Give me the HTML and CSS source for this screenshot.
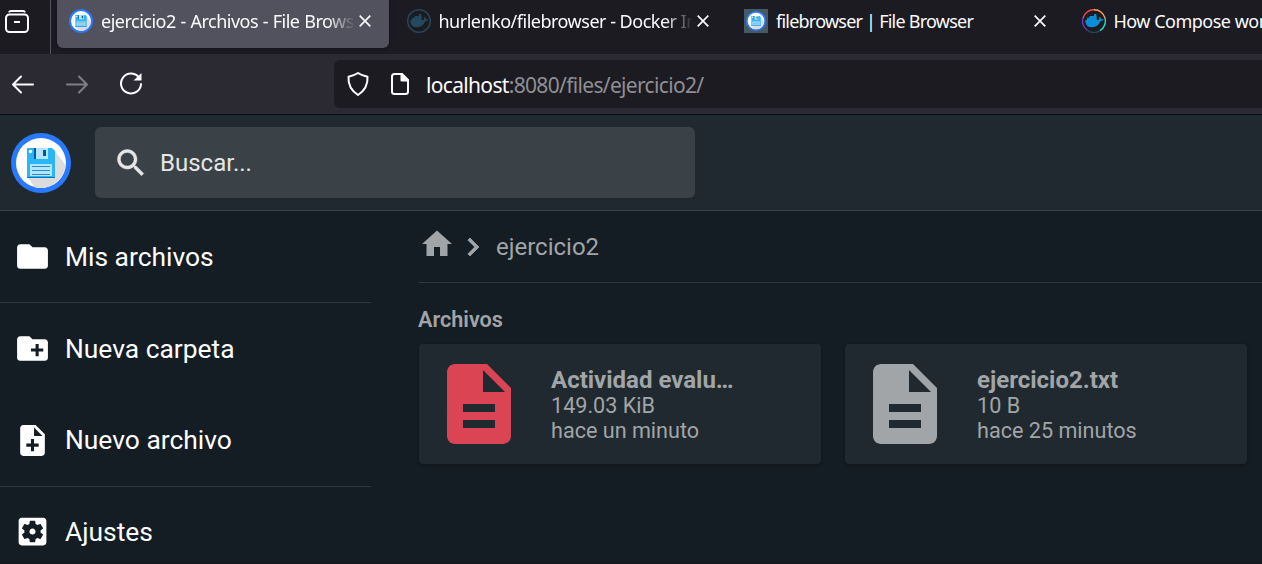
FILE: index.html
```html
<!DOCTYPE html>
<html lang="es">
<head>
<meta charset="utf-8">
<title>ejercicio2 - Archivos - File Browser</title>
<link rel="stylesheet" href="styles.css">
</head>
<body>
<svg class="defs" aria-hidden="true">
  <defs>
    <symbol id="close" viewBox="0 0 12 12"><path d="M.7.7l10.6 10.6M11.3.7L.7 11.3" fill="none" stroke="currentColor" stroke-width="1.7"/></symbol>
    <symbol id="logo" viewBox="0 0 60 60">
      <circle cx="30" cy="30" r="30" fill="#2979ff"/><circle cx="30" cy="30" r="25" fill="#fff"/>
      <path d="M43 17l11.500 15a25 25 0 0 1-30.500 22.300L17 45z" fill="#dcdcdc"/>
      <path d="M16 15h25l3 3v27H16z" fill="#29b6f6"/>
      <path d="M16 44h28v1H16z" fill="#0277bd"/>
      <path d="M23 15h14v11H23z" fill="#b3e5fc"/><path d="M23 15h2v11h-2zM32 17h3v6h-3z" fill="#01579b"/>
      <circle cx="19.500" cy="18.500" r="1.700" fill="#fff"/>
      <path d="M19 31h22v12H19z" fill="#b3e5fc"/><path d="M21 33.500h18M21 37.500h18M21 41.500h18" stroke="#0277bd" stroke-width=".8"/>
    </symbol>
    <symbol id="whale" viewBox="0 0 24 24"><path d="M3.300 11h14c-.7-1.400-.4-2.300.4-3 1 .7 1.300 1.400 1.200 2.200 1-.2 1.800 0 2.400.4-.6 1.300-1.700 1.700-3 1.600-1.700 4-4.600 6-8.600 6-4.300 0-6.500-2.500-6.400-7.200zM5 8.800h9.800V11H5zM7.500 7h7v2h-7zM12 5h2.300v2.200H12z" fill="currentColor"/></symbol>
    <symbol id="file" viewBox="0 0 24 24"><path d="M14 2H6c-1.100 0-1.990.9-1.990 2L4 20c0 1.100.89 2 1.990 2H18c1.100 0 2-.9 2-2V8l-6-6zm2 16H8v-2h8v2zm0-4H8v-2h8v2zm-3-5V3.500L18.500 9H13z" fill="currentColor"/></symbol>
  </defs>
</svg>

<div class="tabs">
  <div class="firefox-view"><svg width="26" height="26" viewBox="0 0 26 26" fill="none" stroke="#fbfbfe" stroke-width="2"><rect x="1" y="5.500" width="22" height="17.500" rx="3.500"/><path d="M4 3.300Q4.500 2 6 2h12q1.500 0 2 1.300M9 13h6"/></svg></div>
  <div class="tab active"><svg class="favicon"><use href="#logo"/></svg><span class="label fade t1">ejercicio2 - Archivos - File Browser</span><svg class="close"><use href="#close"/></svg></div>
  <div class="tab"><svg class="favicon dim" viewBox="0 0 24 24"><circle cx="12" cy="12" r="11.300" fill="none" stroke="currentColor" stroke-width="1.400"/><use href="#whale"/></svg><span class="label fade t2">hurlenko/filebrowser - Docker Image</span><svg class="close"><use href="#close"/></svg></div>
  <div class="tab"><span class="favicon square"><svg width="20" height="20"><use href="#logo"/></svg></span><span class="label t3">filebrowser | File Browser</span><svg class="close"><use href="#close"/></svg></div>
  <div class="tab"><svg class="favicon blue" viewBox="0 0 24 24"><g fill="none" stroke-width="1.400"><path d="M1 9A11.300 11.300 0 0 1 12 .7" stroke="#ff4b58"/><path d="M12 .7A11.300 11.300 0 0 1 23 9" stroke="#ffa94d"/><path d="M23 9a11.300 11.300 0 0 1-5 12.600" stroke="#23dfc2"/><path d="M18 21.600A11.300 11.300 0 0 1 5 21" stroke="#23475e"/><path d="M5 21A11.300 11.300 0 0 1 1 9" stroke="#713cc2"/></g><use href="#whale"/></svg><span class="label t4">How Compose works</span></div>
</div>

<div class="toolbar">
  <div class="nav">
    <svg width="24" height="24" viewBox="0 0 24 24"><path d="M22 12.500H2M10 4.500l-8 8 8 8"/></svg>
    <svg class="off" width="24" height="24" viewBox="0 0 24 24"><path d="M2 12.500h20M14 4.500l8 8-8 8"/></svg>
    <svg width="24" height="24" viewBox="0 0 24 24"><path d="M20.500 6.200A10 10 0 1 0 22 12"/><path d="M22.500 1v7.500h-8z" fill="#fbfbfe" stroke="none"/></svg>
  </div>
  <div class="urlbar">
    <svg width="24" height="26" viewBox="0 0 24 26"><path d="M12 2c3 2 6 3 9.500 3.800.5 7-1.500 13-9.500 18.200C4 18.800 2 12.800 2.500 5.800 6 5 9 4 12 2z"/></svg>
    <svg class="page" width="20" height="24" viewBox="0 0 20 24"><path d="M12 2H4.500A2.500 2.500 0 0 0 2 4.500v15A2.500 2.500 0 0 0 4.500 22h11a2.500 2.500 0 0 0 2.500-2.500V8z"/><path d="M11.500 2v6.500H18z" fill="#fbfbfe"/></svg>
    <span class="url"><b>localhost</b>:8080/files/ejercicio2/</span>
  </div>
</div>

<header class="header">
  <svg class="logo"><use href="#logo"/></svg>
  <div class="search">
    <svg width="36" height="36" viewBox="0 0 24 24"><path d="M15.500 14h-.79l-.28-.27C15.410 12.590 16 11.110 16 9.500 16 5.910 13.090 3 9.500 3S3 5.910 3 9.500 5.910 16 9.500 16c1.610 0 3.090-.59 4.230-1.570l.27.28v.79l5 4.990L20.490 19l-4.990-5zm-6 0C7.010 14 5 11.990 5 9.500S7.010 5 9.500 5 14 7.010 14 9.500 11.990 14 9.500 14z" fill="currentColor" stroke="currentColor" stroke-width=".3"/></svg>
    <span>Buscar...</span>
  </div>
</header>

<div class="body">
  <nav class="side">
    <div class="group"><a class="item"><svg viewBox="0 0 24 24"><path d="M10 4H4c-1.100 0-1.990.9-1.990 2L2 18c0 1.100.9 2 2 2h16c1.100 0 2-.9 2-2V8c0-1.100-.9-2-2-2h-8l-2-2z"/></svg><span>Mis archivos</span></a></div>
    <div class="group"><a class="item"><svg viewBox="0 0 24 24"><path d="M20 6h-8l-2-2H4c-1.110 0-1.990.89-1.990 2L2 18c0 1.110.89 2 2 2h16c1.110 0 2-.89 2-2V8c0-1.110-.89-2-2-2zm-1 8h-3v3h-2v-3h-3v-2h3V9h2v3h3v2z"/></svg><span>Nueva carpeta</span></a>
    <a class="item tall"><svg viewBox="0 0 24 24"><path d="M14 2H6c-1.100 0-1.990.9-1.990 2L4 20c0 1.100.89 2 1.990 2H18c1.100 0 2-.9 2-2V8l-6-6zm2 14h-3v3h-2v-3H8v-2h3v-3h2v3h3v2zm-3-7V3.500L18.500 9H13z"/></svg><span>Nuevo archivo</span></a></div>
    <div class="group"><a class="item short"><svg viewBox="0 0 24 24"><path d="M12 10c-1.100 0-2 .9-2 2s.9 2 2 2 2-.9 2-2-.9-2-2-2zm7-7H5c-1.110 0-2 .9-2 2v14c0 1.100.89 2 2 2h14c1.110 0 2-.9 2-2V5c0-1.100-.89-2-2-2zm-1.750 9c0 .23-.02.46-.05.68l1.480 1.160c.13.11.17.3.08.45l-1.400 2.420c-.09.15-.27.21-.43.15l-1.740-.7c-.36.28-.76.51-1.180.69l-.26 1.850c-.03.17-.18.3-.35.3h-2.800c-.17 0-.32-.13-.35-.29l-.26-1.850c-.43-.18-.82-.41-1.180-.69l-1.740.7c-.16.06-.34 0-.43-.15l-1.400-2.420c-.09-.15-.05-.34.08-.45l1.480-1.160c-.03-.23-.05-.46-.05-.69 0-.23.02-.46.05-.68l-1.480-1.160c-.13-.11-.17-.3-.08-.45l1.400-2.420c.09-.15.27-.21.43-.15l1.740.7c.36-.28.76-.51 1.180-.69l.26-1.850c.03-.17.18-.3.35-.3h2.800c.17 0 .32.13.35.29l.26 1.850c.43.18.82.41 1.180.69l1.740-.7c.16-.06.34 0 .43.15l1.400 2.420c.09.15.05.34-.08.45l-1.480 1.160c.03.23.05.46.05.69z"/></svg><span>Ajustes</span></a></div>
  </nav>
  <main class="main">
    <div class="crumbs">
      <svg class="home" width="36" height="36" viewBox="0 0 24 24"><path d="M10 20v-6h4v6h5v-8h3L12 3 2 12h3v8z"/></svg>
      <svg class="chevron" width="36" height="36" viewBox="0 0 24 24"><path d="M10 6L8.590 7.410 13.170 12l-4.580 4.590L10 18l6-6z" stroke="currentColor" stroke-width=".5"/></svg>
      <span>ejercicio2</span>
    </div>
    <h2>Archivos</h2>
    <div class="cards">
      <div class="card"><svg class="red"><use href="#file"/></svg><div class="info"><p class="name">Actividad evalu…</p><p>149.03 KiB</p><p>hace un minuto</p></div></div>
      <div class="card"><svg><use href="#file"/></svg><div class="info"><p class="name">ejercicio2.txt</p><p>10 B</p><p>hace 25 minutos</p></div></div>
    </div>
  </main>
</div>
<div class="bottom"></div>
</body>
</html>
```
FILE: styles.css
```css
* { box-sizing: border-box; }
body { margin: 0; width: 1262px; height: 564px; overflow: hidden; display: flex; flex-direction: column; background: #141d24; font-family: Roboto, sans-serif; }
svg { display: block; flex: none; }
p, h2 { margin: 0; }
.defs { position: absolute; width: 0; height: 0; }

.tabs { height: 54px; flex: none; display: flex; background: #1c1b22; color: #fbfbfe; font: 18px/24px "Noto Sans", sans-serif; overflow: hidden; }
.firefox-view { width: 51px; flex: none; padding: 9px 0 0 5px; border-right: 1px solid #55545c; margin-right: 6px; }
.tab { width: 332px; height: 48px; flex: none; display: flex; align-items: center; padding: 0 18px 6px 12px; margin-right: 5.500px; }
.tab.active { background: #52525e; border-radius: 0 0 6px 6px; box-shadow: 0 0 4px #0006; }
.favicon { width: 24px; height: 24px; flex: none; margin-right: 8px; }
.dim { color: #24485d; }
.blue { color: #088ed5; }
.square { background: #455a64; display: grid; place-items: center; }
.label { flex: 1; min-width: 0; overflow: hidden; white-space: nowrap; }
.fade { -webkit-mask-image: linear-gradient(to left, transparent, #000 28px); mask-image: linear-gradient(to left, transparent, #000 28px); margin-right: 4px; }
.t1, .t2, .t4 { letter-spacing: -.5px; }
.t1 { word-spacing: .5px; }
.t3 { letter-spacing: -.77px; }
.close { width: 12px; height: 12px; }

.toolbar { height: 61px; flex: none; display: flex; background: #2b2a33; border-bottom: 1px solid #0c0c0d; padding: 6px 0; }
.nav { width: 334px; display: flex; align-items: center; gap: 30px; padding-left: 11px; }
.nav svg, .urlbar svg { fill: none; stroke: #fbfbfe; stroke-width: 2; stroke-linejoin: round; stroke-linecap: round; }
.nav .off { opacity: .4; }
.urlbar { flex: 1; height: 48px; display: flex; align-items: center; padding-left: 12px; background: #1c1b22; border-radius: 6px 0 0 6px; }
.urlbar .page { margin: 0 16px 0 20px; }
.url { color: #8f8f94; font: 21px/28px "Noto Sans", sans-serif; letter-spacing: -.67px; padding-top: 2px; }
.url b { color: #fbfbfe; font-weight: 400; }

.header { height: 96px; flex: none; display: flex; align-items: center; padding-left: 11px; background: #20292f; border-bottom: 1px solid #394147; }
.logo { width: 60px; height: 60px; margin-right: 24px; }
.search { width: 600px; height: 71px; display: flex; align-items: center; gap: 11px; padding-left: 18px; border-radius: 6px; background: #3a4147; color: #e6e6e6; font-size: 24px; }

.body { flex: 1; min-height: 0; display: flex; }
.side { width: 371px; flex: none; overflow: hidden; color: #fff; font-size: 26.400px; }
.group { border-bottom: 1px solid #30383e; }
.item { height: 91px; display: flex; align-items: center; gap: 14px; padding-left: 14px; }
.tall { height: 92px; }
.short { height: 89px; }
.item svg { width: 37px; height: 37px; fill: currentColor; }
.main { flex: 1; min-width: 0; padding-left: 48px; color: #a1a5a7; }
.crumbs { height: 72px; display: flex; align-items: center; border-bottom: 1px solid #30383e; font-size: 24px; }
.crumbs svg { fill: currentColor; }
.home { margin-bottom: 5px; }
.crumbs span { margin-left: 5px; }
h2 { margin-left: -1px; font-size: 21.600px; line-height: 26px; font-weight: 600; padding: 24px 0 11px; }
.cards { display: flex; gap: 24px; }
.card { width: 402px; height: 120px; flex: none; display: flex; align-items: center; gap: 24px; padding: 12px; border-radius: 4px; background: #20292f; box-shadow: 0 1px 3px #0005; font-size: 21.600px; line-height: 25px; }
.card svg { width: 96px; height: 96px; }
.info { padding-top: 2px; }
.red { color: #da4453; }
.name { font-size: 24px; font-weight: 700; }
.bottom { height: 3px; flex: none; background: #16181f; }
```
